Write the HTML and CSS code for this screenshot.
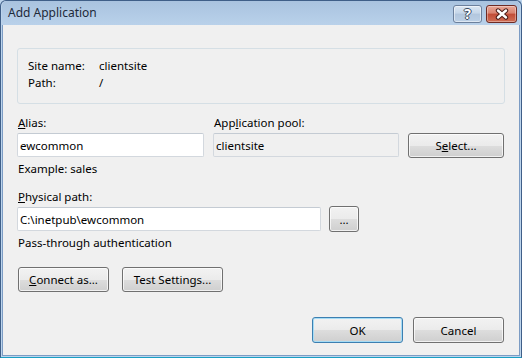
FILE: index.html
```html
<!DOCTYPE html>
<html lang="en">

<head>
  <meta charset="UTF-8">
  <title>Add Application</title>
  <link rel="stylesheet" href="styles.css">
</head>

<body>
  <div class="window">
    <div class="titlebar">
      <span class="title">Add Application</span>
      <div class="caption-buttons">
        <span class="cap-btn help">?</span>
        <span class="cap-btn close">
          <svg width="16" height="12" viewBox="0 0 16 12">
            <path d="M4 2.5 L12 9.5 M12 2.5 L4 9.5" stroke="#4a1c17" stroke-width="4.4" stroke-linecap="round" fill="none"></path>
            <path d="M4 2.5 L12 9.5 M12 2.5 L4 9.5" stroke="#ffffff" stroke-width="2.4" stroke-linecap="round" fill="none"></path>
          </svg>
        </span>
      </div>
    </div>

    <div class="content">
      <div class="group">
        <div class="info-row"><span class="info-label">Site name:</span><span>clientsite</span></div>
        <div class="info-row"><span class="info-label">Path:</span><span>/</span></div>
      </div>

      <div class="pool-grid">
        <label class="label"><u>A</u>lias:</label>
        <label class="label">App<u>l</u>ication pool:</label>
        <span></span>

        <input class="textbox" type="text" value="ewcommon">
        <input class="textbox readonly" type="text" value="clientsite" readonly>
        <button class="btn">S<u>e</u>lect...</button>

        <span class="hint">Example: sales</span>
      </div>

      <label class="label path-label"><u>P</u>hysical path:</label>
      <div class="path-row">
        <input class="textbox path-input" type="text" value="C:\inetpub\ewcommon">
        <button class="btn browse">...</button>
      </div>
      <span class="hint">Pass-through authentication</span>

      <div class="action-row">
        <button class="btn connect"><u>C</u>onnect as...</button>
        <button class="btn test">Test Settin<u>g</u>s...</button>
      </div>

      <div class="footer">
        <button class="btn default">OK</button>
        <button class="btn">Cancel</button>
      </div>
    </div>
  </div>
</body>

</html>
```

FILE: styles.css
```css
:root {
  --face: #f0f0f0;
  --text: #000000;
  --frame: #bcd4ec;
  --frame-edge: #3f5f88;
  --field-border: #d3d8de;
  --group-border: #d5dfe5;
}

* {
  margin: 0;
  padding: 0;
  box-sizing: border-box;
  font-family: 'Noto Sans', 'Liberation Sans', sans-serif;
}

body {
  width: 522px;
  height: 358px;
  overflow: hidden;
  background-color: var(--frame);
}

.window {
  width: 522px;
  height: 358px;
  display: flex;
  flex-direction: column;
  border: 1px solid var(--frame-edge);
  border-bottom-color: #1a9fc4;
  border-radius: 6px 6px 0 0;
  background-color: var(--frame);
  padding: 0 1px 1px 1px;
  font-size: 11.5px;
  color: var(--text);
}

/* title bar */

.titlebar {
  height: 24px;
  flex-shrink: 0;
  display: flex;
  justify-content: space-between;
  align-items: flex-start;
  background: linear-gradient(to bottom, #a9c3df, #b9d1ea);
  border-radius: 5px 5px 0 0;
}

.title {
  padding-left: 6px;
  padding-top: 4px;
  font-size: 12px;
  line-height: 16px;
  color: #1e2a3a;
}

.caption-buttons {
  display: flex;
  gap: 4px;
  padding-top: 4px;
  padding-right: 3px;
}

.cap-btn {
  height: 18px;
  display: flex;
  align-items: center;
  justify-content: center;
  border-radius: 3px;
}

.help {
  width: 29px;
  border: 1px solid #6c809c;
  background: linear-gradient(to bottom, #dbe6f2 0%, #c5d6e9 45%, #b2c6dd 50%, #bcd0e6 100%);
  box-shadow: inset 0 0 0 1px rgba(255, 255, 255, 0.5);
  color: #ffffff;
  font-size: 14px;
  font-weight: bold;
  line-height: 16px;
  text-shadow: -1px 0 #3a4a60, 1px 0 #3a4a60, 0 -1px #3a4a60, 0 1px #3a4a60;
}

.close {
  width: 31px;
  border: 1px solid #6e2b24;
  background: linear-gradient(to bottom, #e8a796 0%, #d9826f 45%, #c24c36 50%, #cf6e55 100%);
  box-shadow: inset 0 0 0 1px rgba(255, 255, 255, 0.35);
}

/* client area */

.content {
  flex: 1;
  display: flex;
  flex-direction: column;
  background-color: var(--face);
  border: 1px solid #7c9cc4;
  border-top: none;
  padding: 23px 14px 12px 14px;
}

.group {
  border: 1px solid var(--group-border);
  border-radius: 3px;
  padding: 8px 10px 12px 10px;
}

.info-row {
  display: flex;
  line-height: 17px;
}

.info-label {
  width: 71px;
}

.pool-grid {
  display: grid;
  grid-template-columns: 187px 186px 96px;
  column-gap: 9px;
  margin-top: 11px;
}

.label {
  display: block;
  line-height: 16px;
  margin-bottom: 2px;
  padding-left: 1px;
}

.textbox {
  height: 24px;
  border: 1px solid var(--field-border);
  border-top-color: #c4cbd3;
  border-radius: 2px;
  background-color: #ffffff;
  padding: 0 2px;
  font-size: 11.5px;
  color: var(--text);
  outline: none;
}

.textbox.readonly {
  background-color: var(--face);
}

.hint {
  display: block;
  line-height: 16px;
  margin-top: 3px;
  padding-left: 1px;
}

.btn {
  height: 25px;
  border: 1px solid #707070;
  border-radius: 3px;
  background: linear-gradient(to bottom, #f2f2f2 0%, #ebebeb 50%, #dddddd 51%, #cfcfcf 100%);
  box-shadow: inset 0 0 0 1px rgba(255, 255, 255, 0.7);
  font-size: 11.5px;
  color: var(--text);
  display: flex;
  align-items: center;
  justify-content: center;
}

.path-label {
  margin-top: 12px;
  margin-bottom: 1px;
}

.path-row {
  display: flex;
  align-items: center;
  gap: 8px;
}

.path-input {
  width: 304px;
}

.browse {
  width: 30px;
  height: 26px;
}

.action-row {
  display: flex;
  gap: 13px;
  margin-top: 16px;
  padding-left: 1px;
}

.connect {
  width: 91px;
}

.test {
  width: 101px;
}

.footer {
  margin-top: auto;
  display: flex;
  justify-content: flex-end;
  gap: 10px;
  padding-right: 1px;
}

.footer .btn {
  width: 91px;
  height: 26px;
}

.btn.default {
  border-color: #3c7fb1;
  box-shadow: inset 0 0 0 1px #a6dcf5;
}
```
